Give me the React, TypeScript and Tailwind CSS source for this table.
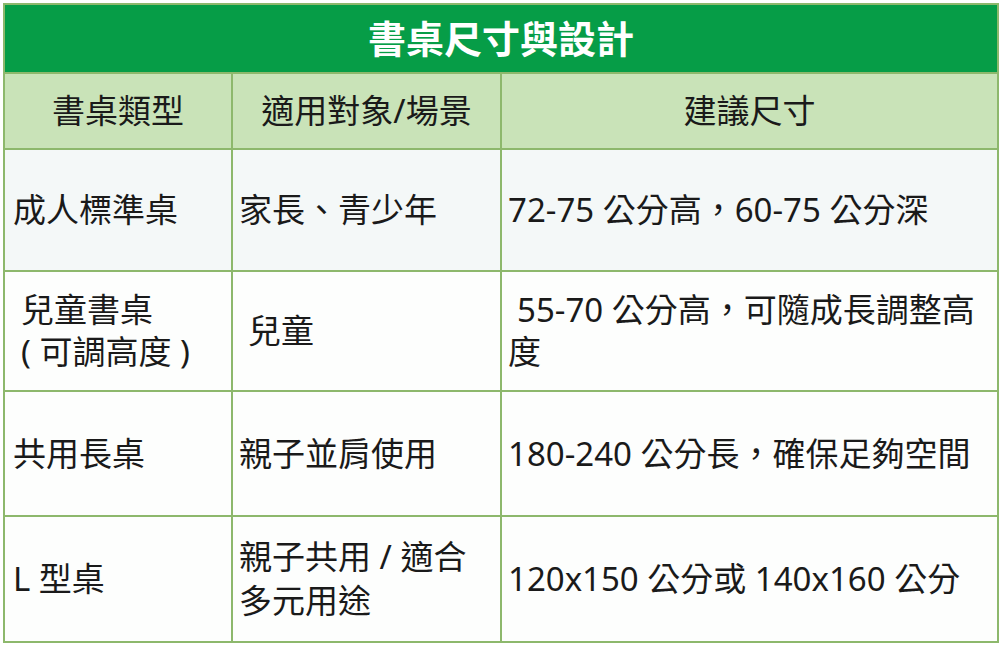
import React from "react";

const font = { fontFamily: '"Noto Sans", "Noto Sans CJK TC", sans-serif' };

export default function App() {
  const cell = "border-2 border-[#8db86c] align-middle text-[33px] leading-[42px] text-[#1a1a1a] font-normal";
  return (
    <div className="w-[1000px] h-[646px] bg-white pl-[3px] pt-[3px]" style={font}>
      <table className="table-fixed border-collapse w-[994px] border-2 border-[#8db86c]">
        <colgroup>
          <col className="w-[228px]" />
          <col className="w-[269px]" />
          <col className="w-[497px]" />
        </colgroup>
        <thead>
          <tr className="h-[69px]">
            <th colSpan={3} className="bg-[#069d47] text-white text-[38px] font-bold text-center border-2 border-[#8db86c]">
              書桌尺寸與設計
            </th>
          </tr>
          <tr className="h-[76px] bg-[#c9e3b8]">
            <th className={`${cell} text-center`}>書桌類型</th>
            <th className={`${cell} text-center`}>適用對象/場景</th>
            <th className={`${cell} text-center`}>建議尺寸</th>
          </tr>
        </thead>
        <tbody>
          <tr className="h-[122px] bg-[#f4f8f8]">
            <td className={`${cell} pl-[8px]`}>成人標準桌</td>
            <td className={`${cell} pl-[6px]`}>家長、青少年</td>
            <td className={`${cell} pl-[6px]`}>72-75 公分高，60-75 公分深</td>
          </tr>
          <tr className="h-[120px] bg-[#fdfefd]">
            <td className={`${cell} pl-[16px]`}>
              兒童書桌
              <br />
              ( 可調高度 )
            </td>
            <td className={`${cell} pl-[15px]`}>兒童</td>
            <td className={`${cell} pl-[6px]`}>
              <span className="pl-[9px]">55-70 公分高，可隨成長調整高</span>
              <br />
              度
            </td>
          </tr>
          <tr className="h-[125px] bg-[#fdfefd]">
            <td className={`${cell} pl-[8px]`}>共用長桌</td>
            <td className={`${cell} pl-[6px]`}>親子並肩使用</td>
            <td className={`${cell} pl-[6px]`}>180-240 公分長，確保足夠空間</td>
          </tr>
          <tr className="h-[126px] bg-[#fdfefd]">
            <td className={`${cell} pl-[8px]`}>L 型桌</td>
            <td className={`${cell} pl-[6px] leading-[44px]`}>
              親子共用 / 適合
              <br />
              多元用途
            </td>
            <td className={`${cell} pl-[6px]`}>120x150 公分或 140x160 公分</td>
          </tr>
        </tbody>
      </table>
    </div>
  );
}
